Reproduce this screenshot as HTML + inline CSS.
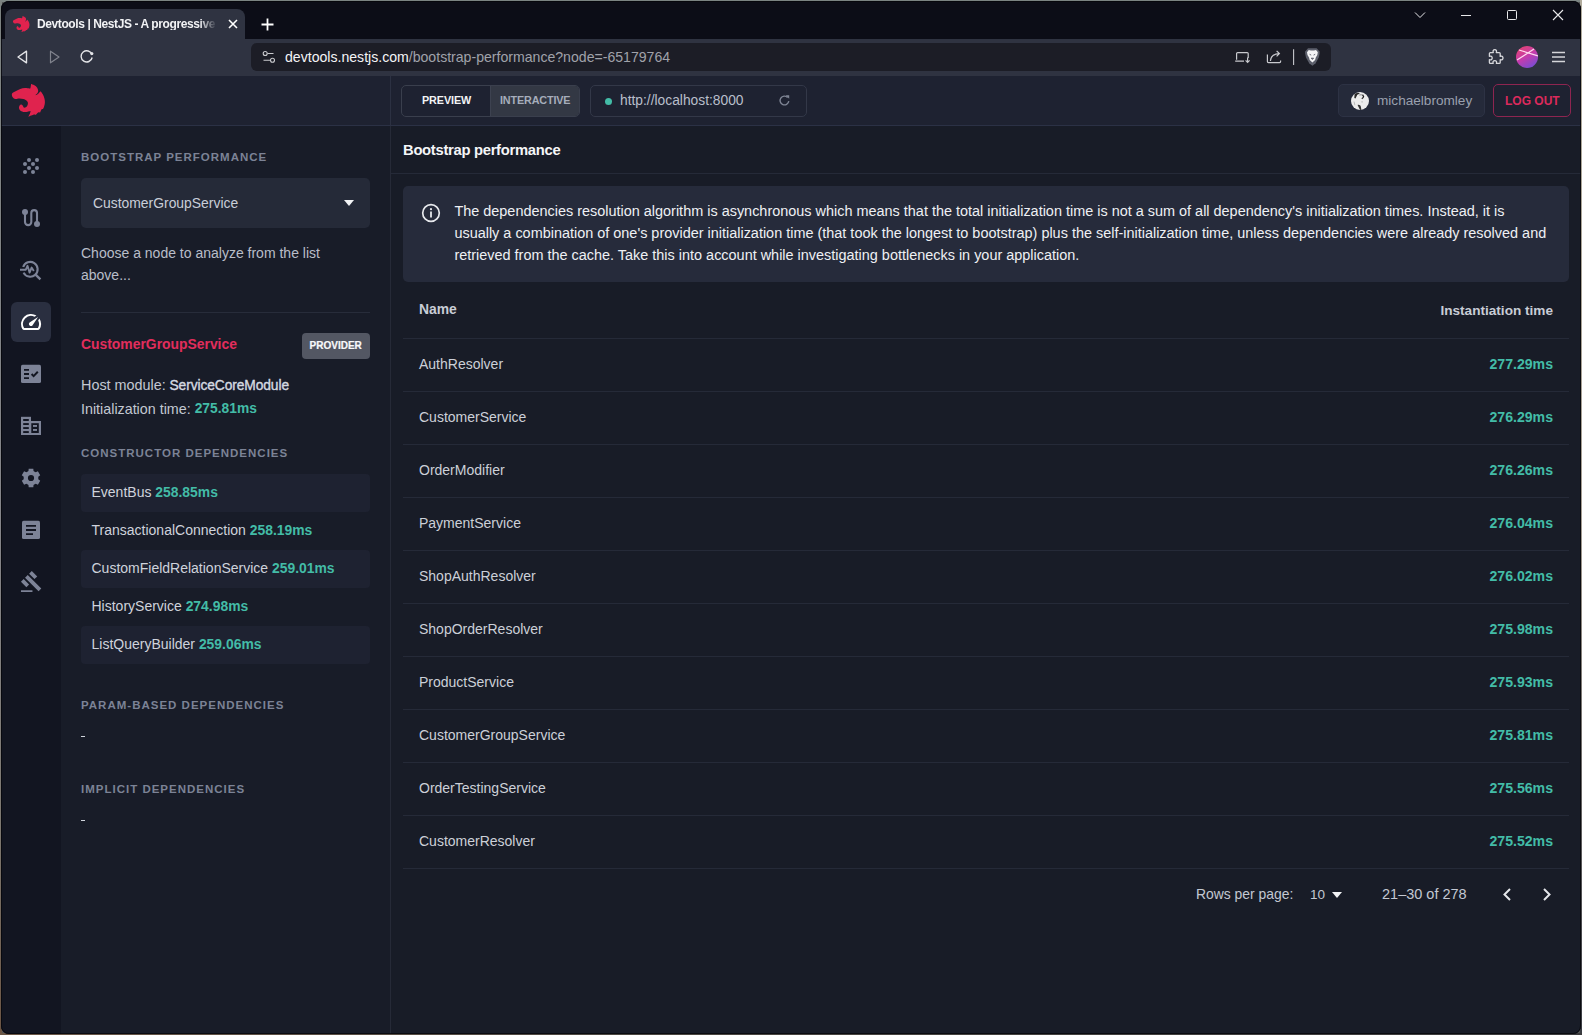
<!DOCTYPE html>
<html><head><meta charset="utf-8">
<style>
*{margin:0;padding:0;box-sizing:border-box}
html,body{width:1582px;height:1035px;overflow:hidden;background:#555;font-family:"Liberation Sans",sans-serif}
.a{position:absolute}
.t{position:absolute;white-space:nowrap;line-height:1}
#win{position:absolute;left:0;top:0;width:1582px;height:1035px;clip-path:inset(1px 1px 1px 1px round 8px);background:#181c27}
</style></head><body>
<div class="a" style="left:0;top:0;width:1582px;height:2px;background:#7b8482"></div>
<div class="a" style="left:0;top:0;width:2px;height:1035px;background:linear-gradient(#7c8280,#85858a 50%,#7d7870 80%,#6b5443)"></div>
<div class="a" style="right:0;top:0;width:2px;height:1035px;background:linear-gradient(#b0ab9c,#a59d92 50%,#4a4a4e 90%,#3a3c42)"></div>
<div class="a" style="left:0;bottom:0;width:1582px;height:2px;background:linear-gradient(90deg,#6a5646,#4a4640 40%,#3a3a3c)"></div>
<div id="win">
<div class="a" style="left:0px;top:0px;width:1582px;height:39px;background:#0c0d17"></div>
<div class="a" style="left:5px;top:9px;width:240px;height:32px;background:#2f3341;border-radius:8px 8px 0 0"></div>
<div class="a" style="left:0px;top:39px;width:1582px;height:37px;background:#2f3341"></div>
<div class="a" style="left:251px;top:43px;width:1080px;height:28px;background:#1c1d26;border-radius:6px"></div>
<svg class="a" style="left:11px;top:14px" width="21" height="21" viewBox="0 0 42 42"><path d="M3.9 15.2C3.83 14.45 3.80 13.70 4.5 13.0C5.20 12.30 6.82 11.68 8.1 11.0C9.38 10.32 10.72 9.38 12.2 8.9C13.68 8.42 15.45 8.17 17.0 8.1C18.55 8.03 20.58 8.57 21.5 8.5C22.42 8.43 22.23 8.43 22.5 7.7C22.77 6.97 23.10 4.10 23.1 4.1C23.10 4.10 25.38 4.70 26.4 5.3C27.42 5.90 28.57 6.75 29.2 7.7C29.83 8.65 30.20 10.05 30.2 11.0C30.20 11.95 29.77 12.67 29.2 13.4C28.63 14.13 26.80 15.40 26.8 15.4C26.80 15.40 28.32 15.20 29.2 14.6C30.08 14.00 31.55 12.40 32.1 11.8C32.65 11.20 32.50 11.00 32.5 11.0C32.50 11.00 34.23 13.32 34.9 14.6C35.57 15.88 36.17 17.35 36.5 18.7C36.83 20.05 36.97 21.42 36.9 22.7C36.83 23.98 36.43 25.32 36.1 26.4C35.77 27.48 34.90 29.20 34.9 29.2C34.90 29.20 33.97 28.85 33.5 29.4C33.03 29.95 32.10 32.50 32.1 32.5C32.10 32.50 30.95 32.00 30.2 32.4C29.45 32.80 27.60 34.90 27.6 34.9C27.60 34.90 26.62 34.40 25.4 34.7C24.18 35.00 20.30 36.70 20.3 36.7C20.30 36.70 21.52 34.65 21.9 33.7C22.28 32.75 22.60 31.00 22.6 31.0C22.60 31.00 21.37 31.22 20.3 31.4C19.23 31.58 17.48 32.20 16.2 32.1C14.92 32.00 13.47 31.48 12.6 30.8C11.73 30.12 11.13 28.93 11.0 28.0C10.87 27.07 11.40 25.77 11.8 25.2C12.20 24.63 12.87 24.47 13.4 24.6C13.93 24.73 14.60 25.50 15.0 26.0C15.40 26.50 15.32 27.40 15.8 27.6C16.28 27.80 17.28 27.60 17.9 27.2C18.52 26.80 19.17 25.95 19.5 25.2C19.83 24.45 20.03 23.45 19.9 22.7C19.77 21.95 19.45 21.30 18.7 20.7C17.95 20.10 16.62 19.47 15.4 19.1C14.18 18.73 12.75 18.50 11.4 18.5C10.05 18.50 8.38 19.27 7.3 19.1C6.22 18.93 5.47 18.15 4.9 17.5C4.33 16.85 3.97 15.95 3.9 15.2Z" fill="#e0234e"/></svg>
<div class="t" style="left:37px;top:17.6px;font-size:12px;letter-spacing:-0.4px;font-weight:bold;color:#f2f3f5;width:180px;overflow:hidden;-webkit-mask-image:linear-gradient(90deg,#000 162px,transparent 180px)">Devtools | NestJS - A progressive framework</div>
<svg class="a" style="left:228px;top:19px" width="10" height="10" viewBox="0 0 10 10"><path d="M1 1L9 9M9 1L1 9" stroke="#fff" stroke-width="1.6"/></svg>
<svg class="a" style="left:261px;top:18px" width="13" height="13" viewBox="0 0 13 13"><path d="M6.5 0.5V12.5M0.5 6.5H12.5" stroke="#fff" stroke-width="1.8"/></svg>
<svg class="a" style="left:1413px;top:10px" width="14" height="10" viewBox="0 0 14 10"><path d="M2 2.5L7 7.5L12 2.5" stroke="#e8e8ea" stroke-width="1" fill="none"/></svg>
<div class="a" style="left:1461px;top:15px;width:10px;height:1px;background:#e8e8ea"></div>
<div class="a" style="left:1507px;top:10px;width:10px;height:10px;border:1px solid #e8e8ea;border-radius:1.5px"></div>
<svg class="a" style="left:1552px;top:9px" width="12" height="12" viewBox="0 0 12 12"><path d="M1 1L11 11M11 1L1 11" stroke="#e8e8ea" stroke-width="1.1"/></svg>
<svg class="a" style="left:15px;top:49px" width="16" height="16" viewBox="0 0 16 16"><path d="M11.5 2.2L3 8l8.5 5.8z" fill="none" stroke="#e2e3e6" stroke-width="1.4" stroke-linejoin="round"/></svg>
<svg class="a" style="left:46px;top:49px" width="16" height="16" viewBox="0 0 16 16"><path d="M4.5 2.2L13 8l-8.5 5.8z" fill="none" stroke="#80838d" stroke-width="1.2" stroke-linejoin="round"/></svg>
<svg class="a" style="left:79px;top:48px" width="16" height="16" viewBox="0 0 16 16"><path d="M13 6.5A5.6 5.6 0 1 0 13.2 9.5" fill="none" stroke="#e2e3e6" stroke-width="1.4"/><circle cx="12.8" cy="5.6" r="1.6" fill="#e2e3e6"/></svg>
<svg class="a" style="left:262px;top:50px" width="14" height="14" viewBox="0 0 14 14"><circle cx="3.2" cy="3.5" r="2" fill="none" stroke="#c9cace" stroke-width="1.1"/><path d="M5.5 3.5H11.5M1.5 10.2H8" stroke="#c9cace" stroke-width="1.1"/><circle cx="10.5" cy="10.2" r="2" fill="none" stroke="#c9cace" stroke-width="1.1"/></svg>
<div class="t" style="left:285px;top:50px;font-size:14.1px;color:#f4f4f6">devtools.nestjs.com<span style="color:#a0a2aa">/bootstrap-performance?node=-65179764</span></div>
<svg class="a" style="left:1230px;top:44px" width="100" height="26" viewBox="0 0 100 26"><g fill="none" stroke="#c8c9ce" stroke-width="1.2"><path d="M6.6 15.8V9.6a1 1 0 0 1 1-1H17.2a1 1 0 0 1 1 1V14"/><path d="M5.2 17.2H14"/><path d="M17.6 13.5V18.3M15.6 16.4l2 2 2-2"/><path d="M37.4 10.6V17.6a1 1 0 0 0 1 1H49.6a1 1 0 0 0 1-1V16.4"/><path d="M40.4 17C40.8 12.5 44 9.6 49.3 9.6M46.6 6.8l2.8 2.8-2.8 2.8"/></g><path d="M63.6 5.2V21" stroke="#c8c9ce" stroke-width="1.1"/><path d="M78 4.3H86.7L89.3 7.3 89.7 9 88.7 13.5 85.6 19.2 82.4 21.7 79.2 19.2 76 13.5 75 9 75.4 7.3Z" fill="#5c5f6b"/><path d="M77 8.2L78.8 6 80.8 6.4H84L86 6 87.8 8.2 87.3 11 85.8 13.4 85.1 16 82.4 18.6 79.7 16 79 13.4 77.5 11Z" fill="#f4f4f6"/><path d="M79.6 10.3l1.6.8M85.2 10.3l-1.6.8M81.2 14.2h2.4l-1.2 1.2z" stroke="#5c5f6b" stroke-width=".9" fill="#5c5f6b"/></svg>
<svg class="a" style="left:1486px;top:48px" width="18" height="18" viewBox="0 0 18 18"><path d="M7.2 2.6C7.8 1.4 9.8 1.4 10.4 2.6 10.7 3.3 10.5 4 10.3 4.6H13.2C13.8 4.6 14.2 5 14.2 5.6V8.4C14.8 8.2 15.6 8 16.2 8.4 17.3 9.1 17.3 10.9 16.2 11.6 15.6 12 14.8 11.8 14.2 11.6V14.4C14.2 15 13.8 15.4 13.2 15.4H10.4C10.6 14.8 10.8 14 10.4 13.4 9.7 12.3 7.9 12.3 7.2 13.4 6.8 14 7 14.8 7.2 15.4H4.4C3.8 15.4 3.4 15 3.4 14.4V11.6C4 11.8 4.8 12 5.4 11.6 6.5 10.9 6.5 9.1 5.4 8.4 4.8 8 4 8.2 3.4 8.4V5.6C3.4 5 3.8 4.6 4.4 4.6H7.3C7.1 4 6.9 3.3 7.2 2.6Z" fill="none" stroke="#d5d6da" stroke-width="1.3" stroke-linejoin="round"/></svg>
<div class="a" style="left:1516px;top:46px;width:22px;height:22px;border-radius:50%;background:linear-gradient(150deg,#ea4467 0%,#c23cae 50%,#6452de 100%);overflow:hidden"><svg width="22" height="22" viewBox="0 0 22 22"><path d="M1 14L18 3M3 4L22 10" stroke="#ffd8ef" stroke-width="1.2"/></svg></div>
<svg class="a" style="left:1551px;top:51px" width="15" height="12" viewBox="0 0 15 12"><path d="M1 1.5h13M1 6h13M1 10.5h13" stroke="#d5d6da" stroke-width="1.3"/></svg>
<div class="a" style="left:0px;top:76px;width:1582px;height:50px;background:#1e2231;border-bottom:1px solid #2b3145"></div>
<div class="a" style="left:390px;top:76px;width:1px;height:50px;background:#2c3142"></div>
<div class="a" style="left:0px;top:126px;width:61px;height:910px;background:#121521"></div>
<div class="a" style="left:61px;top:126px;width:330px;height:910px;background:#181c28;border-right:1px solid #262a37"></div>
<div class="a" style="left:391px;top:126px;width:1191px;height:910px;background:#181c27"></div>
<svg class="a" style="left:8px;top:80px" width="42" height="42" viewBox="0 0 42 42"><path d="M3.9 15.2C3.83 14.45 3.80 13.70 4.5 13.0C5.20 12.30 6.82 11.68 8.1 11.0C9.38 10.32 10.72 9.38 12.2 8.9C13.68 8.42 15.45 8.17 17.0 8.1C18.55 8.03 20.58 8.57 21.5 8.5C22.42 8.43 22.23 8.43 22.5 7.7C22.77 6.97 23.10 4.10 23.1 4.1C23.10 4.10 25.38 4.70 26.4 5.3C27.42 5.90 28.57 6.75 29.2 7.7C29.83 8.65 30.20 10.05 30.2 11.0C30.20 11.95 29.77 12.67 29.2 13.4C28.63 14.13 26.80 15.40 26.8 15.4C26.80 15.40 28.32 15.20 29.2 14.6C30.08 14.00 31.55 12.40 32.1 11.8C32.65 11.20 32.50 11.00 32.5 11.0C32.50 11.00 34.23 13.32 34.9 14.6C35.57 15.88 36.17 17.35 36.5 18.7C36.83 20.05 36.97 21.42 36.9 22.7C36.83 23.98 36.43 25.32 36.1 26.4C35.77 27.48 34.90 29.20 34.9 29.2C34.90 29.20 33.97 28.85 33.5 29.4C33.03 29.95 32.10 32.50 32.1 32.5C32.10 32.50 30.95 32.00 30.2 32.4C29.45 32.80 27.60 34.90 27.6 34.9C27.60 34.90 26.62 34.40 25.4 34.7C24.18 35.00 20.30 36.70 20.3 36.7C20.30 36.70 21.52 34.65 21.9 33.7C22.28 32.75 22.60 31.00 22.6 31.0C22.60 31.00 21.37 31.22 20.3 31.4C19.23 31.58 17.48 32.20 16.2 32.1C14.92 32.00 13.47 31.48 12.6 30.8C11.73 30.12 11.13 28.93 11.0 28.0C10.87 27.07 11.40 25.77 11.8 25.2C12.20 24.63 12.87 24.47 13.4 24.6C13.93 24.73 14.60 25.50 15.0 26.0C15.40 26.50 15.32 27.40 15.8 27.6C16.28 27.80 17.28 27.60 17.9 27.2C18.52 26.80 19.17 25.95 19.5 25.2C19.83 24.45 20.03 23.45 19.9 22.7C19.77 21.95 19.45 21.30 18.7 20.7C17.95 20.10 16.62 19.47 15.4 19.1C14.18 18.73 12.75 18.50 11.4 18.5C10.05 18.50 8.38 19.27 7.3 19.1C6.22 18.93 5.47 18.15 4.9 17.5C4.33 16.85 3.97 15.95 3.9 15.2Z" fill="#e0234e"/></svg>
<div class="a" style="left:401px;top:85px;width:179px;height:32px;border:1px solid #3a3f4d;border-radius:5px;overflow:hidden"><div class="a" style="left:88px;top:0;width:90px;height:30px;background:#333844;border-left:1px solid #3d4250"></div></div>
<div class="t" style="left:422px;top:95.06px;font-size:10.8px;font-weight:bold;color:#f3f4f6;letter-spacing:-0.1px">PREVIEW</div>
<div class="t" style="left:500px;top:95.06px;font-size:10.8px;font-weight:bold;color:#a6adbb;letter-spacing:-0.15px">INTERACTIVE</div>
<div class="a" style="left:590px;top:85px;width:217px;height:32px;border:1px solid #333848;border-radius:5px"></div>
<div class="a" style="left:604.5px;top:97.5px;width:7px;height:7px;border-radius:50%;background:#43bca7"></div>
<div class="t" style="left:620px;top:94.32px;font-size:13.8px;color:#b9bfcb">http://localhost:8000</div>
<svg class="a" style="left:778px;top:94px" width="13" height="13" viewBox="0 0 13 13"><path d="M10.8 7.2A4.4 4.4 0 1 1 9.6 3.4" fill="none" stroke="#7f8595" stroke-width="1.4"/><path d="M7.6 1.2h3.6v3.6z" fill="#7f8595"/></svg>
<div class="a" style="left:1338px;top:84px;width:147px;height:33px;background:#252a3a;border:1px solid #2d3244;border-radius:5px"></div>
<div class="a" style="left:1351px;top:92px;width:18px;height:18px;border-radius:50%;background:#ececec;overflow:hidden"><svg width="18" height="18" viewBox="0 0 30 30"><path d="M6 3C8 1.5 12 1.5 15 2.5L10.5 4.5 7.5 11 5.5 10z" fill="#2a2a2a"/><path d="M14 5C16 4.5 18.5 4.5 20 5.5" stroke="#555" stroke-width="1.2" fill="none"/><path d="M19.5 4.5L21 8 18.5 11.5" stroke="#1a1a1a" stroke-width="2" fill="none"/><path d="M17 10.5c1 .5 2 .5 2.5 0M17.5 16.5c.8.5 1.5.3 2-.3" stroke="#777" stroke-width="1" fill="none"/><path d="M11 21.5c1.5-.5 3.5 0 5 1.5L17.5 30H15z" fill="#333"/><path d="M5 16l1.5 6" stroke="#999" stroke-width="1"/></svg></div>
<div class="t" style="left:1377px;top:93.69px;font-size:13.6px;color:#9aa0ae">michaelbromley</div>
<div class="a" style="left:1493px;top:84px;width:78px;height:33px;border:1px solid #8e2550;border-radius:5px"></div>
<div class="t" style="left:1505px;top:95.04px;font-size:12px;font-weight:bold;color:#dc2a5c">LOG OUT</div>
<div class="a" style="left:11px;top:302px;width:40px;height:40px;border-radius:6px;background:#2a2f40"></div>
<svg class="a" style="left:15px;top:150px" width="32" height="32" viewBox="0 0 32 32" fill="#7d8397"><circle cx="14" cy="10" r="2"/><circle cx="22" cy="10" r="2"/><circle cx="10" cy="14" r="2"/><circle cx="18" cy="14" r="2"/><circle cx="14" cy="18" r="2"/><circle cx="22" cy="18" r="2"/><circle cx="10" cy="22" r="2"/><circle cx="18" cy="22" r="2"/></svg>
  <svg class="a" style="left:15px;top:202px" width="32" height="32" viewBox="0 0 32 32"><path d="M10 10V20A3.15 3.15 0 0 0 16.3 20V11A2.85 2.85 0 0 1 22 11V22" fill="none" stroke="#7d8397" stroke-width="2.1"/><circle cx="10" cy="10" r="3" fill="#7d8397"/><circle cx="22" cy="22" r="3" fill="#7d8397"/></svg>
  <svg class="a" style="left:15px;top:254px" width="32" height="32" viewBox="0 0 32 32"><path d="M8.2 13A7.4 7.4 0 1 1 8.6 18.6" fill="none" stroke="#7d8397" stroke-width="2.1"/><path d="M20.6 20.6L25.4 25.4" stroke="#7d8397" stroke-width="2.4"/><path d="M5 15.7H10.8L12.5 11.8L14.6 18.6L16.6 13.6L18.8 17" fill="none" stroke="#7d8397" stroke-width="1.9" stroke-linejoin="round"/></svg>
  <svg class="a" style="left:19.1px;top:310px" width="24" height="24" viewBox="0 0 24 24"><path fill="#fff" d="M20.38 8.57l-1.23 1.85a8 8 0 0 1-.22 7.58H5.07A8 8 0 0 1 15.58 6.85l1.85-1.23A10 10 0 0 0 3.35 19a2 2 0 0 0 1.72 1h13.85a2 2 0 0 0 1.74-1 10 10 0 0 0-.27-10.44zm-9.79 6.84a2 2 0 0 0 2.83 0l5.66-8.49-8.490 5.66a2 2 0 0 0 0 2.83z"/></svg>
  <svg class="a" style="left:15px;top:358px" width="32" height="32" viewBox="0 0 32 32"><rect x="6" y="6.8" width="20" height="18.2" rx="1.6" fill="#7d8397"/><path d="M9 11.9h5M9 16h5M9 20.1h5" stroke="#121521" stroke-width="1.8"/><path d="M16.6 16L18.6 18.1L22.8 13.8" fill="none" stroke="#121521" stroke-width="2"/></svg>
  <svg class="a" style="left:15px;top:410px" width="32" height="32" viewBox="0 0 32 32" fill="#7d8397"><rect x="6" y="6.8" width="10" height="18.2"/><rect x="16" y="11" width="10" height="14"/><g fill="#121521"><rect x="8.2" y="9" width="5.6" height="2"/><rect x="8.2" y="13.1" width="5.6" height="1.9"/><rect x="8.2" y="17.1" width="5.6" height="1.9"/><rect x="8.2" y="21.1" width="5.6" height="1.9"/><rect x="16.3" y="13.2" width="7.5" height="9.8"/></g><rect x="18" y="15" width="4" height="1.9"/><rect x="18" y="19" width="4" height="1.9"/></svg>
  <svg class="a" style="left:15px;top:462px" width="32" height="32" viewBox="0 0 32 32"><path fill="#7d8397" fill-rule="evenodd" d="M13.47 9.05 L13.68 6.69 L18.32 6.69 L18.53 9.05 L19.65 9.68 L20.76 10.33 L22.91 9.33 L25.23 13.35 L23.29 14.72 L23.30 16.00 L23.29 17.28 L25.23 18.65 L22.91 22.67 L20.76 21.67 L19.65 22.32 L18.53 22.95 L18.32 25.31 L13.68 25.31 L13.47 22.95 L12.35 22.32 L11.24 21.67 L9.09 22.67 L6.77 18.65 L8.71 17.28 L8.70 16.00 L8.71 14.72 L6.77 13.35 L9.09 9.33 L11.24 10.33 L12.35 9.68Z M19.1 16 A3.1 3.1 0 1 0 12.9 16 A3.1 3.1 0 1 0 19.1 16Z"/></svg>
  <svg class="a" style="left:15px;top:514px" width="32" height="32" viewBox="0 0 32 32"><rect x="7" y="6.8" width="18" height="18.2" rx="1.6" fill="#7d8397"/><path d="M11 11.9h10M11 16h10M11 20.1h7" stroke="#121521" stroke-width="1.8"/></svg>
  <svg class="a" style="left:19.7px;top:570px" width="23" height="23" viewBox="0 0 24 24"><path fill="#7d8397" d="M1 21h12v2H1zM5.245 8.07l2.83-2.827 14.14 14.142-2.828 2.828zM12.317 1l5.657 5.656-2.83 2.83-5.654-5.66zM3.825 9.485l5.657 5.657-2.828 2.828-5.657-5.657z"/></svg>
<div class="t" style="left:81px;top:151.57px;font-size:11.5px;font-weight:bold;letter-spacing:1.0px;color:#7c8396">BOOTSTRAP PERFORMANCE</div>
<div class="a" style="left:81px;top:178px;width:289px;height:50px;background:#252a38;border-radius:5px"></div>
<div class="t" style="left:93px;top:196.73px;font-size:13.9px;color:#c9ced8">CustomerGroupService</div>
<svg class="a" style="left:344px;top:200px" width="10" height="6" viewBox="0 0 10 6"><path d="M0 0h10L5 6z" fill="#f2f3f5"/></svg>
<div class="t" style="left:81px;top:246.15px;font-size:14px;color:#b9bec9">Choose a node to analyze from the list</div>
<div class="t" style="left:81px;top:268.15px;font-size:14px;color:#b9bec9">above...</div>
<div class="a" style="left:81px;top:312px;width:289px;height:1px;background:#272c3a"></div>
<div class="t" style="left:81px;top:338.03px;font-size:13.9px;font-weight:bold;color:#e22d5c">CustomerGroupService</div>
<div class="a" style="left:302px;top:333px;width:68px;height:26px;background:#535763;border-radius:4px"></div>
<div class="t" style="left:309.6px;top:340.94px;font-size:10px;font-weight:bold;color:#f8f9fa;-webkit-text-stroke:0.2px #f8f9fa">PROVIDER</div>
<div class="t" style="left:81px;top:378.11px;font-size:14.4px;color:#c3c8d2">Host module: </div>
<div class="t" style="left:169.5px;top:378.62px;font-size:13.8px;color:#d6dae2;-webkit-text-stroke:0.35px #d6dae2;letter-spacing:-0.1px">ServiceCoreModule</div>
<div class="t" style="left:81px;top:401.90px;font-size:14.3px;color:#c3c8d2">Initialization time: </div>
<div class="t" style="left:194.7px;top:402.32px;font-size:13.8px;font-weight:bold;color:#43bca7">275.81ms</div>
<div class="t" style="left:81px;top:447.77px;font-size:11.5px;font-weight:bold;letter-spacing:1.0px;color:#7c8396">CONSTRUCTOR DEPENDENCIES</div>
<div class="a" style="left:81px;top:474px;width:289px;height:38px;background:#1e2231;border-radius:4px"></div>
<div class="t" style="left:91.5px;top:485.15px;font-size:14px;color:#cfd3dc">EventBus <span style="font-weight:bold;color:#43bca7;font-size:13.9px">258.85ms</span></div>
<div class="t" style="left:91.5px;top:523.15px;font-size:14px;color:#cfd3dc">TransactionalConnection <span style="font-weight:bold;color:#43bca7;font-size:13.9px">258.19ms</span></div>
<div class="a" style="left:81px;top:550px;width:289px;height:38px;background:#1e2231;border-radius:4px"></div>
<div class="t" style="left:91.5px;top:561.15px;font-size:14px;color:#cfd3dc">CustomFieldRelationService <span style="font-weight:bold;color:#43bca7;font-size:13.9px">259.01ms</span></div>
<div class="t" style="left:91.5px;top:599.15px;font-size:14px;color:#cfd3dc">HistoryService <span style="font-weight:bold;color:#43bca7;font-size:13.9px">274.98ms</span></div>
<div class="a" style="left:81px;top:626px;width:289px;height:38px;background:#1e2231;border-radius:4px"></div>
<div class="t" style="left:91.5px;top:637.15px;font-size:14px;color:#cfd3dc">ListQueryBuilder <span style="font-weight:bold;color:#43bca7;font-size:13.9px">259.06ms</span></div>
<div class="t" style="left:81px;top:699.67px;font-size:11.5px;font-weight:bold;letter-spacing:1.0px;color:#7c8396">PARAM-BASED DEPENDENCIES</div>
<div class="a" style="left:81px;top:736px;width:4px;height:1.2px;background:#d0d4dc"></div>
<div class="t" style="left:81px;top:783.77px;font-size:11.5px;font-weight:bold;letter-spacing:1.0px;color:#7c8396">IMPLICIT DEPENDENCIES</div>
<div class="a" style="left:81px;top:820px;width:4px;height:1.2px;background:#d0d4dc"></div>
<div class="t" style="left:403px;top:142.77px;font-size:14.8px;font-weight:bold;color:#f5f6f8;letter-spacing:-0.3px">Bootstrap performance</div>
<div class="a" style="left:391px;top:173px;width:1191px;height:1px;background:#252a38"></div>
<div class="a" style="left:403px;top:186px;width:1166px;height:96px;background:#262b3b;border-radius:5px"></div>
<svg class="a" style="left:421px;top:203px" width="20" height="20" viewBox="0 0 20 20"><circle cx="10" cy="10" r="8.3" fill="none" stroke="#e6e8ec" stroke-width="1.7"/><circle cx="10" cy="6.2" r="1.1" fill="#e6e8ec"/><path d="M10 8.6v5.8" stroke="#e6e8ec" stroke-width="1.8"/></svg>
<div class="t" style="left:454.4px;top:203.77px;font-size:14.45px;color:#eef0f4">The dependencies resolution algorithm is asynchronous which means that the total initialization time is not a sum of all dependency's initialization times. Instead, it is</div>
<div class="t" style="left:454.4px;top:225.77px;font-size:14.45px;color:#eef0f4">usually a combination of one's provider initialization time (that took the longest to bootstrap) plus the self-initialization time, unless dependencies were already resolved and</div>
<div class="t" style="left:454.4px;top:247.77px;font-size:14.45px;color:#eef0f4">retrieved from the cache. Take this into account while investigating bottlenecks in your application.</div>
<div class="t" style="left:419px;top:303.43px;font-size:13.9px;font-weight:bold;color:#c8cdd6">Name</div>
<div class="t" style="right:29px;top:303.69px;font-size:13.6px;font-weight:bold;color:#c8cdd6">Instantiation time</div>
<div class="a" style="left:403px;top:338px;width:1166px;height:1px;background:#252a38"></div>
<div class="a" style="left:403px;top:391px;width:1166px;height:1px;background:#252a38"></div>
<div class="a" style="left:403px;top:444px;width:1166px;height:1px;background:#252a38"></div>
<div class="a" style="left:403px;top:497px;width:1166px;height:1px;background:#252a38"></div>
<div class="a" style="left:403px;top:550px;width:1166px;height:1px;background:#252a38"></div>
<div class="a" style="left:403px;top:603px;width:1166px;height:1px;background:#252a38"></div>
<div class="a" style="left:403px;top:656px;width:1166px;height:1px;background:#252a38"></div>
<div class="a" style="left:403px;top:709px;width:1166px;height:1px;background:#252a38"></div>
<div class="a" style="left:403px;top:762px;width:1166px;height:1px;background:#252a38"></div>
<div class="a" style="left:403px;top:815px;width:1166px;height:1px;background:#252a38"></div>
<div class="a" style="left:403px;top:868px;width:1166px;height:1px;background:#252a38"></div>
<div class="t" style="left:419px;top:357.15px;font-size:14px;color:#ccd0d8">AuthResolver</div>
<div class="t" style="right:29px;top:357.06px;font-size:14.1px;font-weight:bold;color:#43bca7">277.29ms</div>
<div class="t" style="left:419px;top:410.15px;font-size:14px;color:#ccd0d8">CustomerService</div>
<div class="t" style="right:29px;top:410.06px;font-size:14.1px;font-weight:bold;color:#43bca7">276.29ms</div>
<div class="t" style="left:419px;top:463.15px;font-size:14px;color:#ccd0d8">OrderModifier</div>
<div class="t" style="right:29px;top:463.06px;font-size:14.1px;font-weight:bold;color:#43bca7">276.26ms</div>
<div class="t" style="left:419px;top:516.15px;font-size:14px;color:#ccd0d8">PaymentService</div>
<div class="t" style="right:29px;top:516.06px;font-size:14.1px;font-weight:bold;color:#43bca7">276.04ms</div>
<div class="t" style="left:419px;top:569.15px;font-size:14px;color:#ccd0d8">ShopAuthResolver</div>
<div class="t" style="right:29px;top:569.06px;font-size:14.1px;font-weight:bold;color:#43bca7">276.02ms</div>
<div class="t" style="left:419px;top:622.15px;font-size:14px;color:#ccd0d8">ShopOrderResolver</div>
<div class="t" style="right:29px;top:622.06px;font-size:14.1px;font-weight:bold;color:#43bca7">275.98ms</div>
<div class="t" style="left:419px;top:675.15px;font-size:14px;color:#ccd0d8">ProductService</div>
<div class="t" style="right:29px;top:675.06px;font-size:14.1px;font-weight:bold;color:#43bca7">275.93ms</div>
<div class="t" style="left:419px;top:728.15px;font-size:14px;color:#ccd0d8">CustomerGroupService</div>
<div class="t" style="right:29px;top:728.06px;font-size:14.1px;font-weight:bold;color:#43bca7">275.81ms</div>
<div class="t" style="left:419px;top:781.15px;font-size:14px;color:#ccd0d8">OrderTestingService</div>
<div class="t" style="right:29px;top:781.06px;font-size:14.1px;font-weight:bold;color:#43bca7">275.56ms</div>
<div class="t" style="left:419px;top:834.15px;font-size:14px;color:#ccd0d8">CustomerResolver</div>
<div class="t" style="right:29px;top:834.06px;font-size:14.1px;font-weight:bold;color:#43bca7">275.52ms</div>
<div class="t" style="left:1196px;top:887.53px;font-size:13.9px;color:#c3c8d2">Rows per page:</div>
<div class="t" style="left:1310px;top:887.57px;font-size:13.5px;color:#c3c8d2">10</div>
<svg class="a" style="left:1332px;top:892px" width="10" height="6" viewBox="0 0 10 6"><path d="M0 0h10L5 6z" fill="#f2f3f5"/></svg>
<div class="t" style="left:1382px;top:886.73px;font-size:14.5px;color:#c3c8d2">21–30 of 278</div>
<svg class="a" style="left:1501px;top:887px" width="12" height="15" viewBox="0 0 12 15"><path d="M9 2L3.5 7.5 9 13" fill="none" stroke="#e4e6ea" stroke-width="2"/></svg>
<svg class="a" style="left:1541px;top:887px" width="12" height="15" viewBox="0 0 12 15"><path d="M3 2l5.5 5.5L3 13" fill="none" stroke="#e4e6ea" stroke-width="2"/></svg>
</div>
<div class="a" style="left:1px;top:1px;width:1580px;height:1033px;border:1px solid rgba(5,5,10,0.75);border-radius:8px;pointer-events:none"></div>
</body></html>
